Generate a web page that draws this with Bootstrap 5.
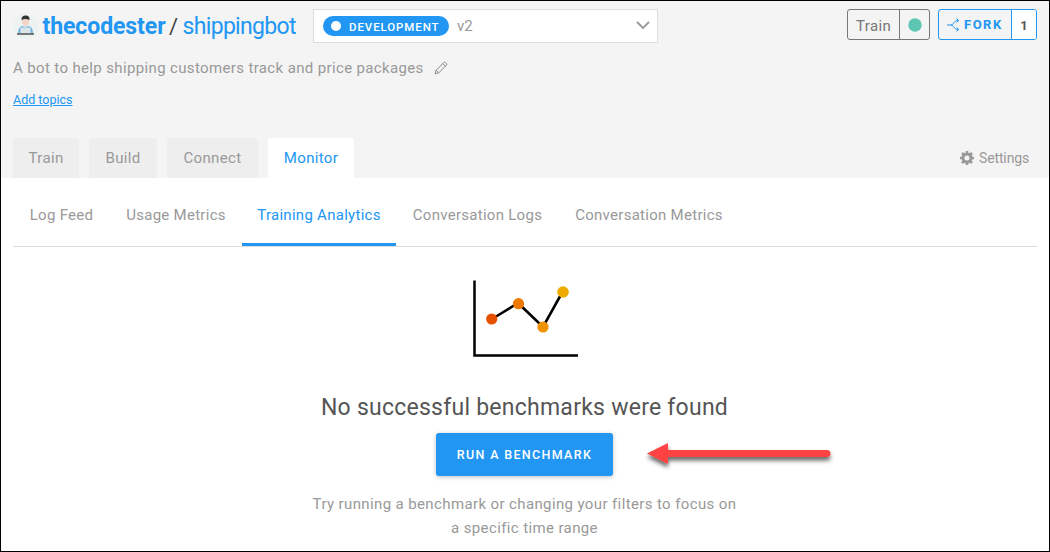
<!DOCTYPE html>
<html lang="en">
<head>
<meta charset="utf-8">
<meta name="viewport" content="width=device-width, initial-scale=1">
<title>thecodester / shippingbot</title>
<link href="https://cdn.jsdelivr.net/npm/bootstrap@5.3.0/dist/css/bootstrap.min.css" rel="stylesheet">
<style>
body{font-family:Roboto,"Liberation Sans",sans-serif;font-size:15px;line-height:24px;color:#999;background:#fff;overflow:hidden}
a{text-decoration:none;color:#2196f3}
.frame{height:552px;border:1px solid #000}
.top-area{height:177px;background:#f4f4f4;padding:8px 12px 0}
.title-row{height:34px}
.avatar{width:25px;height:25px;margin:5px 4.5px 0 0}
.bot-title{font-size:23px;line-height:36px;width:270.5px;white-space:nowrap;color:#444;word-spacing:-1.2px}
.bot-title b{font-weight:700;letter-spacing:-.08px}
.bot-title .slash{font-size:22px;margin-left:-1px}
.bot-title .bot-name{letter-spacing:-.69px}
.version{width:345px;height:34px;background:#fff;border:1px solid #ddd;border-radius:0;padding:0 7px 0 9px;color:#999}
.env{height:20px;width:126px;background:#2196f3;border-radius:10px;color:#fff;font-size:11.5px;font-weight:500;letter-spacing:.9px;padding:1px 0 0 8px}
.env i{width:10px;height:10px;border-radius:50%;background:#fff;margin:-1px 8px 0 0}
.pair{height:31px;border:1px solid #777;border-radius:3px;color:#777;overflow:hidden}
.pair>span{height:100%}
.pair>span+span{border-left:1px solid currentColor}
.pair.fork{border-color:#2196f3;color:#2196f3}
.pair .train-label{width:51px;letter-spacing:.4px;padding-top:2px}
.pair .status{width:30px}
.fork .fork-label{width:72px;padding-left:8px}
.fork-label b{font-size:13px;letter-spacing:1.5px;margin-left:4px}
.fork .num{border-color:#2196f3!important;background:#fff;color:#555;font-size:13px;font-weight:700;width:25px;padding-top:2px}
.desc{margin-top:13px;height:24px;letter-spacing:.36px}
.desc svg{margin-left:10px}
.topics{font-size:12.5px;line-height:18px;margin-top:11px;text-decoration:underline;display:block}
.main-tabs{height:40px;margin-top:29px;gap:10px}
.main-tabs a{height:40px;background:#eee;color:#999;border-radius:3px 3px 0 0;line-height:41px;text-align:center;letter-spacing:.35px}
.main-tabs a.active{background:#fff;color:#2196f3}
.settings{font-size:14px;letter-spacing:-.15px;color:#999;padding-right:8px;margin-left:auto;height:40px}
.settings svg{margin-right:5px}
.sub-tabs{margin:0 12px;height:69px;border-bottom:1px solid #ddd;letter-spacing:.28px}
.sub-tabs a{height:68px;color:#999;line-height:75px;text-align:center;white-space:nowrap}
.sub-tabs a.active{color:#2196f3;border-bottom:3px solid #2196f3}
.w66{width:66px}.w68{width:68px}.w91{width:91px}.w86{width:86px}
.w97{width:97px}.w132{width:132px}.w154{width:154px}.w163{width:163px}.w180{width:180px}
.empty{padding-top:29px;position:relative;margin-right:1px}
.empty h1{font-size:23px;line-height:32px;letter-spacing:.25px;color:#555;font-weight:400;margin:32px 0 9px;white-space:nowrap}
.run{width:177px;height:43px;background:#2196f3;color:#fff;border:0;border-radius:3px;font-size:12.5px;font-weight:500;letter-spacing:1.33px;padding:1px 0 0;box-shadow:0 1px 4px rgba(0,0,0,.25)}
.hint{margin:16px 0 0;text-align:center;white-space:nowrap;letter-spacing:.38px}
.arrow{position:absolute;left:640px;top:189px}
</style>
</head>
<body>
<div class="frame">
<header class="top-area">
  <div class="d-flex title-row">
    <svg class="avatar" viewBox="0 0 25 25"><circle cx="12.500" cy="12.500" r="12.500" fill="#edf2f3"/><path d="M9 5h7v4q-1 3-3.500 3T9 9z" fill="#f3d5c8"/><path d="M8.500 6Q8 2 12 1.500q5-.5 4.500 4.500Q12 4 8.500 6z" fill="#333"/><path d="M5 20q0-7 4-8l3.500 1 3.500-1q4 1 4 8z" fill="#75b5df"/><path d="M7.500 13.500h10V20h-10z" fill="#dbe5ea"/><path d="M4 19h17v2H4z" fill="#777"/></svg>
    <div class="bot-title"><a href="#"><b>thecodester</b></a> <span class="slash">/</span> <a href="#" class="bot-name">shippingbot</a></div>
    <div class="version d-flex align-items-center"><span class="env d-flex align-items-center"><i></i><span>DEVELOPMENT</span></span><span class="ms-2">v2</span>
      <svg class="ms-auto" width="14" height="10" viewBox="0 0 14 10"><path d="M1 1l6 6 6-6" fill="none" stroke="#999" stroke-width="1.800"/></svg></div>
    <div class="d-flex ms-auto gap-2">
      <div class="pair d-flex"><span class="px-2 d-flex align-items-center train-label">Train</span><span class="status d-flex align-items-center justify-content-center"><svg width="14" height="14"><circle cx="7" cy="7" r="6.700" fill="#5cc6b3"/></svg></span></div>
      <div class="pair fork d-flex"><span class="fork-label d-flex align-items-center"><svg width="13" height="14" viewBox="0 0 13 14" fill="none" stroke="#2196f3"><path d="M0 7h4C7 7 6 2.500 11.500 2.500M4 7c3 0 2 4.500 7.500 4.500M9.500.5l2.200 2-2.200 2M9.500 9.500l2.200 2-2.200 2"/></svg><b>FORK</b></span><span class="num d-flex align-items-center justify-content-center">1</span></div>
    </div>
  </div>
  <div class="desc d-flex align-items-center"><span>A bot to help shipping customers track and price packages</span>
    <svg width="14" height="14" viewBox="0 0 14 14" fill="none" stroke="#888"><path d="M1.200 12.800l.9-3.500 7.700-7.800q.9-.7 1.800.1l.8.8q.8.900 0 1.800l-7.700 7.700zM2.100 9.300l2.600 2.600M8.700 2.600l2.700 2.700"/></svg></div>
  <a href="#" class="topics">Add topics</a>
  <nav class="main-tabs d-flex"><a href="#" class="w66">Train</a><a href="#" class="w68">Build</a><a href="#" class="w91">Connect</a><a href="#" class="w86 active">Monitor</a>
    <div class="settings d-flex align-items-center"><svg width="14" height="14" viewBox="-7 -7 14 14"><circle r="4" fill="none" stroke="#999" stroke-width="3"/><path d="M0-7V-4M0 7V4M-7 0h3M7 0H4M-5-5l2 2M5 5L3 3M-5 5l2-2M5-5L3-3" stroke="#999" stroke-width="2.600"/></svg><span>Settings</span></div>
  </nav>
</header>
<main>
  <nav class="sub-tabs d-flex"><a href="#" class="w97">Log Feed</a><a href="#" class="w132">Usage Metrics</a><a href="#" class="w154 active">Training Analytics</a><a href="#" class="w163">Conversation Logs</a><a href="#" class="w180">Conversation Metrics</a></nav>
  <section class="empty d-flex flex-column align-items-center">
    <svg width="106" height="84" viewBox="0 0 106 84" class="d-block"><path d="M2.500 4.500v75H106" fill="none" stroke="#000" stroke-width="2.500"/><path d="M20 43l26-16 25 24 20-36" fill="none" stroke="#000" stroke-width="2.600"/><circle cx="19.700" cy="43" r="5.600" fill="#e65100"/><circle cx="46.500" cy="27.700" r="5.600" fill="#ef7900"/><circle cx="71" cy="51" r="5.600" fill="#f09300"/><circle cx="91" cy="16" r="5.800" fill="#f0ab00"/></svg>
    <h1>No successful benchmarks were found</h1>
    <button class="run btn">RUN A BENCHMARK</button>
    <p class="hint">Try running a benchmark or changing your filters to focus on<br>a specific time range</p>
    <svg class="arrow" width="200" height="40" viewBox="0 0 200 40"><defs><filter id="sh" x="-5%" y="-40%" width="110%" height="210%"><feDropShadow dx="0" dy="3.500" stdDeviation="2" flood-opacity=".6"/></filter></defs><path d="M6 17.500L27 7V14H186a3.500 3.500 0 0 1 0 7H27V28z" fill="#ff4343" filter="url(#sh)"/></svg>
  </section>
</main>
</div>
<script src="https://cdn.jsdelivr.net/npm/bootstrap@5.3.0/dist/js/bootstrap.bundle.min.js"></script>
</body>
</html>
